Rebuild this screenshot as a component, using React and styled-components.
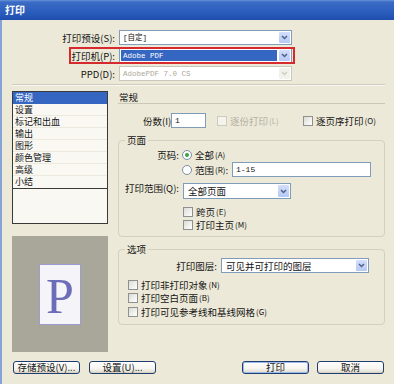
import React from "react";
import styled, { createGlobalStyle } from "styled-components";

const GlobalStyle = createGlobalStyle`
  html, body { margin: 0; padding: 0; background: #ece9d8; }
  body { font-family: "Noto Sans CJK SC", "Noto Sans", sans-serif; }
  * { box-sizing: border-box; }
`;

const Window = styled.div`
  width: 394px;
  height: 384px;
  overflow: hidden;
  background: #ece9d8;
  display: flex;
  flex-direction: column;
  font-size: 9.5px;
  line-height: 12px;
  color: #141414;
`;

const TitleBar = styled.div`
  height: 20px;
  flex-shrink: 0;
  display: flex;
  align-items: center;
  padding-left: 5px;
  color: #fff;
  font-weight: bold;
  font-size: 10px;
  background: linear-gradient(#6a93da 0, #3a6bc5 2px, #2d5fbe 55%, #1e4fae 100%);
`;

const Content = styled.div`
  flex: 1;
  border-left: 2px solid #85a3d6;
  padding: 10px 9px 0 10px;
  display: flex;
  flex-direction: column;
`;

/* top form: preset / printer / ppd */
const TopForm = styled.div`
  display: flex;
  flex-direction: column;
  gap: 3px;
`;

const Row = styled.div`
  position: relative;
  display: grid;
  grid-template-columns: 103px 173px;
  column-gap: 4px;
  align-items: center;
  height: 15px;

  ${(p) =>
    p.$marked &&
    `
    &::before {
      content: "";
      position: absolute;
      left: 57px;
      right: 90px;
      top: -1px;
      bottom: -1px;
      border: 2px solid #d72a2e;
      pointer-events: none;
    }
  `}
`;

const RightLabel = styled.span`
  text-align: right;
  white-space: nowrap;
`;

const SelectBox = styled.div`
  display: flex;
  align-items: stretch;
  width: ${(p) => p.$w || "100%"};
  height: ${(p) => p.$h || "15px"};
  margin-left: ${(p) => p.$ml || "0"};
  border: 1px solid ${(p) => (p.$disabled ? "#c9c7ba" : "#7f9db9")};
  background: #fff;
`;

const SelectValue = styled.span`
  flex: 1;
  display: flex;
  align-items: center;
  padding-left: ${(p) => (p.$mono ? "2px" : "3px")};
  margin: 1px;
  white-space: nowrap;
  overflow: hidden;
  background: ${(p) => (p.$selected ? "#3566c2" : "transparent")};
  color: ${(p) => (p.$selected ? "#fff" : p.$disabled ? "#aca899" : "#141414")};
  font-family: ${(p) =>
    p.$mono ? '"Liberation Mono", "Noto Sans CJK SC", monospace' : "inherit"};
  font-size: ${(p) => (p.$mono ? "7.5px" : "9.5px")};
`;

const DropButton = styled.span`
  width: 11px;
  margin: 1px;
  display: flex;
  align-items: center;
  justify-content: center;
  border-radius: 1px;
  background: ${(p) =>
    p.$disabled ? "#f2f2ec" : "linear-gradient(#d2defc, #b6c9f5)"};
`;

const Chevron = ({ disabled }) => (
  <svg width="7" height="5" viewBox="0 0 7 5">
    <path
      d="M1 1 L3.5 3.5 L6 1"
      fill="none"
      stroke={disabled ? "#cdcdc4" : "#4d6185"}
      strokeWidth="1.5"
    />
  </svg>
);

const Select = ({ value, w, h, ml, disabled, selected, mono }) => (
  <SelectBox $w={w} $h={h} $ml={ml} $disabled={disabled}>
    <SelectValue $selected={selected} $disabled={disabled} $mono={mono}>
      {value}
    </SelectValue>
    <DropButton $disabled={disabled}>
      <Chevron disabled={disabled} />
    </DropButton>
  </SelectBox>
);

const Separator = styled.div`
  margin-top: 3px;
  height: 2px;
  border-top: 1px solid #cfccbd;
  border-bottom: 1px solid #f8f7f1;
`;

/* main area */
const Main = styled.div`
  margin-top: 5px;
  display: flex;
  gap: 10px;
`;

const LeftCol = styled.div`
  width: 96px;
  flex-shrink: 0;
  display: flex;
  flex-direction: column;
  gap: 12px;
`;

const ListBox = styled.div`
  height: 133px;
  border: 1px solid #3a3a3a;
  background: #f9f8f3;
`;

const ListItems = styled.div`
  border-bottom: 1px solid #3a3a3a;
`;

const ListItem = styled.div`
  height: 12px;
  font-size: 9px;
  line-height: 11px;
  padding-left: 2px;
  white-space: nowrap;
  border-bottom: 1px solid ${(p) => (p.$active ? "#3566c2" : "#eceadf")};
  background: ${(p) => (p.$active ? "#3566c2" : "transparent")};
  color: ${(p) => (p.$active ? "#fff" : "#141414")};

  &:last-child {
    border-bottom: none;
  }
`;

const Preview = styled.div`
  height: 116px;
  background: #a9a799;
  display: flex;
  align-items: center;
  justify-content: center;
`;

const Page = styled.div`
  width: 42px;
  height: 61px;
  background: #f4f4f9;
  border: 1px solid #9c9cd2;
  display: flex;
  align-items: center;
  justify-content: center;
  color: #6c6cb9;
  font-family: "Liberation Serif", serif;
  font-size: 50px;
  line-height: 1;
  padding-top: 4px;
`;

const RightCol = styled.div`
  flex: 1;
  display: flex;
  flex-direction: column;
`;

const SectionHeader = styled.div`
  height: 13px;
  line-height: 12px;
  padding-left: 1px;
  border-bottom: 1px solid #cbc8b8;
`;

const CopiesRow = styled.div`
  margin-top: 9px;
  height: 15px;
  display: flex;
  align-items: center;
  padding-left: 25px;
`;

const CopiesLabel = styled.span`
  width: 28px;
  padding-right: 2px;
  text-align: right;
  white-space: nowrap;
`;

const TextInput = styled.div`
  width: ${(p) => p.$w};
  height: 15px;
  border: 1px solid #7f9db9;
  background: #fff;
  padding-left: 3px;
  display: flex;
  align-items: center;
  font-family: "Liberation Mono", monospace;
  font-size: 8px;
`;

const CheckItem = styled.label`
  display: flex;
  align-items: center;
  white-space: nowrap;
  height: ${(p) => p.$h || "13px"};
  width: ${(p) => p.$w || "auto"};
  margin-left: ${(p) => p.$ml || "0"};
  color: ${(p) => (p.$disabled ? "#b3b0a2" : "#141414")};
`;

const Box = styled.span`
  width: 10px;
  height: 10px;
  flex-shrink: 0;
  margin-right: 3px;
  border: 1px solid ${(p) => (p.$disabled ? "#cdcbbf" : "#8f9191")};
  background: ${(p) =>
    p.$disabled ? "#f4f3ec" : "linear-gradient(135deg, #dcdcd5, #ffffff)"};
`;

const Small = styled.span`
  font-size: 8px;
  margin-left: 1px;
`;

const Check = ({ children, hint, ...rest }) => (
  <CheckItem {...rest}>
    <Box $disabled={rest.$disabled} />
    {children}
    <Small>{hint}</Small>
  </CheckItem>
);

const Group = styled.fieldset`
  margin: 6px 0 0 0;
  padding: 0 0 5px 0;
  min-width: 0;
  border: 1px solid #d3d0c0;
  border-radius: 4px;
`;

const Legend = styled.legend`
  margin-left: 6px;
  padding: 0 2px;
  line-height: 12px;
  font-size: 9.5px;
`;

const PageGrid = styled.div`
  padding-top: 2px;
  display: grid;
  grid-template-columns: 61px 1fr;
  grid-template-rows: 14px 15px 22px 19px 13px;
  column-gap: 2px;
  align-items: end;
`;

const GridLabel = styled.span`
  grid-column: 1;
  text-align: right;
  padding-right: 1px;
  white-space: nowrap;
  align-self: center;
`;

const GridCell = styled.div`
  grid-column: 2;
  display: flex;
  align-items: center;
`;

const RadioItem = styled.label`
  display: flex;
  align-items: center;
  white-space: nowrap;
  height: 14px;
  width: ${(p) => p.$w || "auto"};
`;

const RadioDot = styled.span`
  width: 10px;
  height: 10px;
  flex-shrink: 0;
  margin-right: 3px;
  border-radius: 50%;
  border: 1px solid #7b8ea3;
  background: #fff;
  display: flex;
  align-items: center;
  justify-content: center;

  &::after {
    content: "";
    width: 4px;
    height: 4px;
    border-radius: 50%;
    background: ${(p) => (p.$checked ? "#3aa23f" : "transparent")};
  }
`;

const LayerRow = styled.div`
  margin-top: 3px;
  height: 15px;
  display: flex;
  align-items: center;
  gap: 4px;
`;

const LayerLabel = styled.span`
  width: 98px;
  text-align: right;
  white-space: nowrap;
`;

const CheckList = styled.div`
  margin-top: 5px;
  padding-left: 9px;
  display: flex;
  flex-direction: column;
`;

const Footer = styled.div`
  margin-top: 9px;
  padding: 0 1px;
  display: flex;
  justify-content: space-between;
`;

const ButtonGroup = styled.div`
  display: flex;
  gap: ${(p) => p.$gap};
`;

const Button = styled.button`
  width: 67px;
  height: 13px;
  padding: 0;
  font-family: inherit;
  font-size: 9.5px;
  line-height: 11px;
  color: #141414;
  border: 1px solid #1f3d6e;
  border-radius: 3px;
  background: linear-gradient(#ffffff 0%, #f5f4ee 60%, #dcd9cb 100%);
  box-shadow: ${(p) =>
    p.$default ? "inset 0 0 0 1px #9bbbef" : "inset 0 -1px 0 #d6d3c4"};
`;

const sections = ["常规", "设置", "标记和出血", "输出", "图形", "颜色管理", "高级", "小结"];

export default function App() {
  return (
    <>
      <GlobalStyle />
      <Window>
        <TitleBar>打印</TitleBar>
        <Content>
          <TopForm>
            <Row>
              <RightLabel>打印预设(S):</RightLabel>
              <Select value="[自定]" mono />
            </Row>
            <Row $marked>
              <RightLabel>打印机(P):</RightLabel>
              <Select value="Adobe PDF" mono selected />
            </Row>
            <Row>
              <RightLabel>PPD(D):</RightLabel>
              <Select value="AdobePDF 7.0 CS" mono disabled />
            </Row>
          </TopForm>
          <Separator />

          <Main>
            <LeftCol>
              <ListBox>
                <ListItems>
                  {sections.map((s, i) => (
                    <ListItem key={s} $active={i === 0}>
                      {s}
                    </ListItem>
                  ))}
                </ListItems>
              </ListBox>
              <Preview>
                <Page>P</Page>
              </Preview>
            </LeftCol>

            <RightCol>
              <SectionHeader>常规</SectionHeader>
              <CopiesRow>
                <CopiesLabel>份数(I):</CopiesLabel>
                <TextInput $w="35px">1</TextInput>
                <Check $disabled $ml="11px" $w="86px" hint="(L)">
                  逐份打印
                </Check>
                <Check hint="(O)">逐页序打印</Check>
              </CopiesRow>

              <Group>
                <Legend>页面</Legend>
                <PageGrid>
                  <GridLabel>页码:</GridLabel>
                  <GridCell>
                    <RadioItem>
                      <RadioDot $checked />
                      全部<Small>(A)</Small>
                    </RadioItem>
                  </GridCell>
                  <GridCell>
                    <RadioItem $w="50px">
                      <RadioDot />
                      范围<Small>(R)</Small>:
                    </RadioItem>
                    <TextInput $w="139px">1-15</TextInput>
                  </GridCell>
                  <GridLabel>打印范围(Q):</GridLabel>
                  <GridCell>
                    <Select value="全部页面" w="108px" h="16px" ml="1px" />
                  </GridCell>
                  <GridCell>
                    <Check $ml="1px" hint="(E)">跨页</Check>
                  </GridCell>
                  <GridCell>
                    <Check $ml="1px" hint="(M)">打印主页</Check>
                  </GridCell>
                </PageGrid>
              </Group>

              <Group>
                <Legend>选项</Legend>
                <LayerRow>
                  <LayerLabel>打印图层:</LayerLabel>
                  <Select value="可见并可打印的图层" w="148px" />
                </LayerRow>
                <CheckList>
                  <Check $h="13.5px" hint="(N)">打印非打印对象</Check>
                  <Check $h="13.5px" hint="(B)">打印空白页面</Check>
                  <Check $h="13.5px" hint="(G)">打印可见参考线和基线网格</Check>
                </CheckList>
              </Group>
            </RightCol>
          </Main>

          <Footer>
            <ButtonGroup $gap="9px">
              <Button>存储预设(V)...</Button>
              <Button>设置(U)...</Button>
            </ButtonGroup>
            <ButtonGroup $gap="8px">
              <Button $default>打印</Button>
              <Button>取消</Button>
            </ButtonGroup>
          </Footer>
        </Content>
      </Window>
    </>
  );
}
